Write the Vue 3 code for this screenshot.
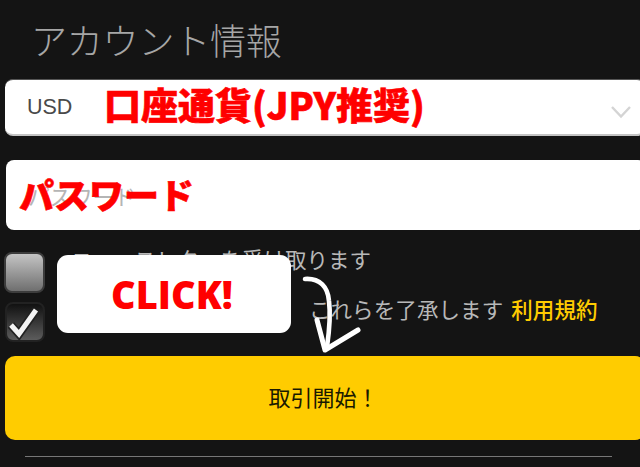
<script setup>
const title = 'アカウント情報'
</script>

<template>
  <div class="page">
    <h1 class="title">{{ title }}</h1>

    <div class="select">
      <span class="select-value">USD</span>
      <svg class="chevron" width="22" height="14" viewBox="0 0 22 14">
        <path d="M2 2 L11 11.5 L20 2" fill="none" stroke="#d4d4d4" stroke-width="2.4" />
      </svg>
      <span class="note note-currency">口座通貨(JPY推奨)</span>
    </div>

    <div class="input">
      <span class="placeholder">パスワード</span>
      <span class="note note-password">パスワード</span>
    </div>

    <div class="checks">
      <label class="check-row first">
        <span class="box box-off"></span>
        <span class="check-text">ニュースレターを受け取ります</span>
      </label>
      <label class="check-row second">
        <span class="box box-on">
          <svg width="36" height="36" viewBox="0 0 36 36">
            <path d="M4 21 L12 30 L29 6" fill="none" stroke="#222" stroke-width="8.5" />
            <path d="M4 21 L12 30 L29 6" fill="none" stroke="#f4f4f4" stroke-width="5" />
          </svg>
        </span>
        <span class="check-text">私は満18歳以上であり、 これらを了承します <a class="terms">利用規約</a></span>
      </label>
    </div>

    <button class="submit" type="button">取引開始！</button>
    <div class="divider"></div>

    <div class="click-card">CLICK!</div>
    <svg class="arrow" width="70" height="85" viewBox="0 0 70 85">
      <path d="M7 4 C22 3 30 12 31 26 C33 42 31 58 29 72" fill="none" stroke="#fff" stroke-width="4.6" stroke-linecap="round" />
      <path d="M19 45 L27 75 L60 55" fill="none" stroke="#fff" stroke-width="5" stroke-linecap="round" stroke-linejoin="round" />
    </svg>
  </div>
</template>

<style>
html, body { margin: 0; background: #141414; }
</style>

<style scoped>
.page {
  position: relative;
  width: 640px;
  height: 467px;
  overflow: hidden;
  box-sizing: border-box;
  padding: 0 0 0 5px;
  background: #141414;
  font-family: "Liberation Sans", "Noto Sans CJK JP", sans-serif;
  display: flex;
  flex-direction: column;
}
.title {
  margin: 0;
  height: 79px;
  box-sizing: border-box;
  padding: 17px 0 0 26px;
  font-size: 36px;
  line-height: 44px;
  letter-spacing: -0.2px;
  color: #a6a6a6;
  font-family: "Noto Sans CJK JP", sans-serif;
  font-weight: 300;
  white-space: nowrap;
}
.select {
  position: relative;
  height: 57px;
  width: 640px;
  box-sizing: border-box;
  background: #fff;
  border-radius: 8px;
  border-bottom: 2px solid #c4c4c4;
  border-top: 1px solid #555;
  display: flex;
  align-items: center;
  padding-left: 22px;
}
.select-value { font-size: 21.5px; color: #4a4a4a; }
.chevron { position: absolute; right: 13px; top: 25px; }
.input {
  position: relative;
  margin: 24px 0 0 1px;
  height: 70px;
  width: 640px;
  box-sizing: border-box;
  background: #fff;
  border-radius: 8px;
  display: flex;
  align-items: center;
  padding-left: 22px;
}
.placeholder { font-size: 21.5px; color: #b5b5b5; font-family: "Noto Sans CJK JP", sans-serif; }
.note {
  position: absolute;
  color: #ff0000;
  font-family: "Noto Sans CJK JP", sans-serif;
  font-weight: 900;
  white-space: nowrap;
  -webkit-text-stroke: 0.6px #ff0000;
}
.note-currency { left: 99px; top: 0; font-size: 37px; line-height: 48px; }
.note-password { left: 13px; top: 10px; font-size: 35px; line-height: 48px; }
.checks {
  margin-top: 22px;
  display: flex;
  flex-direction: column;
  gap: 9px;
}
.check-row { display: flex; align-items: center; margin-left: -1px; height: 41px; }
.second { margin-left: 0; height: 40px; }
.box {
  width: 41px;
  height: 41px;
  box-sizing: border-box;
  border-radius: 8px;
  flex: none;
  display: flex;
  align-items: center;
  justify-content: center;
}
.box-off {
  background: linear-gradient(#c4c4c4, #6f6f6f);
  border: 2px solid #3c3c3c;
}
.box-on {
  width: 40px;
  height: 40px;
  background: linear-gradient(#111, #5c5c5c);
  border: 2px solid #222;
}
.check-text {
  font-size: 21.5px;
  color: #b8b8b8;
  white-space: nowrap;
  font-family: "Noto Sans CJK JP", sans-serif;
  position: relative;
}
.first .check-text { top: -14px; margin-left: 26px; }
.second .check-text { top: -14px; margin-left: 20px; letter-spacing: 0.1px; }
.terms { color: #ffcc00; font-weight: 500; margin-left: 3px; }
.submit {
  margin-top: 14px;
  width: 640px;
  height: 84px;
  flex: none;
  border: 0;
  border-radius: 10px;
  background: #ffcc00;
  color: #1a1a00;
  font-size: 22px;
  font-family: "Noto Sans CJK JP", sans-serif;
  padding: 0 3px 4px 0;
}
.divider {
  margin: 16px 0 0 20px;
  width: 587px;
  height: 1px;
  background: #777;
  flex: none;
}
.click-card {
  position: absolute;
  left: 57px;
  top: 255px;
  width: 234px;
  height: 78px;
  box-sizing: border-box;
  padding-right: 4px;
  border-radius: 11px;
  background: #fff;
  color: #ff0000;
  font-family: "Open Sans", sans-serif;
  font-weight: 800;
  font-size: 38px;
  line-height: 78px;
  text-align: center;
}
.arrow { position: absolute; left: 298px; top: 275px; }
</style>
